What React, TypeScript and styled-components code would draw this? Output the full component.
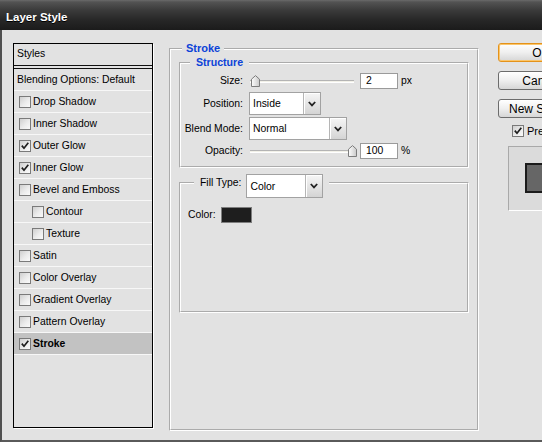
import React from "react";
import styled, { createGlobalStyle } from "styled-components";

const GlobalStyle = createGlobalStyle`
  html, body {
    margin: 0;
    padding: 0;
    background: #e2e2e2;
    overflow: hidden;
  }
  body {
    font-family: "Liberation Sans", Arial, sans-serif;
    font-size: 10.4px;
    color: #000;
  }
  * {
    box-sizing: border-box;
  }
`;

const Window = styled.div`
  width: 542px;
  height: 442px;
  overflow: hidden;
  display: flex;
  flex-direction: column;
  background: #e2e2e2;
`;

const TitleBar = styled.div`
  height: 30px;
  flex-shrink: 0;
  display: flex;
  align-items: center;
  padding: 3px 0 0 6px;
  background: linear-gradient(
    to bottom,
    #6a6a6a 0px,
    #535353 2px,
    #3b3b3b 10px,
    #272727 20px,
    #1b1b1b 30px
  );
`;

const Title = styled.span`
  color: #fff;
  font-weight: bold;
  font-size: 11.5px;
  text-shadow: 0 1px 0 #000;
`;

const Body = styled.div`
  flex: 1;
  display: flex;
  align-items: flex-start;
  padding: 13px 0 0 11px;
  border-left: 2px solid #505050;
  border-bottom: 2px solid #5a5a5a;
`;

/* ---------- left list ---------- */

const StylesPanel = styled.div`
  width: 140px;
  height: 385px;
  flex-shrink: 0;
  border: 1px solid #000;
  box-shadow: 1px 1px 0 #fff;
  display: flex;
  flex-direction: column;
`;

const PanelHeader = styled.div`
  height: 25px;
  padding: 0 0 2px 3px;
  display: flex;
  align-items: center;
  border-bottom: 4px double #111;
`;

const PanelRow = styled.div<{ $indent?: boolean; $selected?: boolean }>`
  height: 22px;
  display: flex;
  align-items: center;
  padding-left: ${(p) => (p.$indent ? "18px" : "5px")};
  border-bottom: 1px solid #f7f7f7;
  background: ${(p) => (p.$selected ? "#c2c2c2" : "transparent")};
  font-weight: ${(p) => (p.$selected ? "bold" : "normal")};
`;

const BlendRow = styled(PanelRow)`
  padding-left: 3px;
`;

const BoxWrap = styled.span`
  width: 12px;
  height: 12px;
  flex-shrink: 0;
  border: 1px solid #7a7a7a;
  background: linear-gradient(135deg, #cfcfcf 0%, #ececec 55%, #fafafa 100%);
  display: flex;
  align-items: center;
  justify-content: center;
  margin-right: 2px;
`;

const CheckBox = ({ checked }: { checked?: boolean }) => (
  <BoxWrap>
    {checked && (
      <svg width="10" height="10" viewBox="0 0 10 10">
        <path
          d="M1.8 4.6 L4 7.2 L8.3 1.8"
          fill="none"
          stroke="#1e1e1e"
          strokeWidth="1.7"
        />
      </svg>
    )}
  </BoxWrap>
);

/* ---------- fieldsets ---------- */

const OuterGroup = styled.fieldset`
  margin: -1px 0 0 16px;
  width: 310px;
  height: 389px;
  flex-shrink: 0;
  min-width: 0;
  border: 2px groove #fff;
  padding: 0 8px;
`;

const BlueLegend = styled.legend<{ $ml: number; $pad: number; $size: number }>`
  margin-left: ${(p) => p.$ml}px;
  padding: 0 ${(p) => p.$pad}px;
  color: #0c42d8;
  font-weight: bold;
  font-size: ${(p) => p.$size}px;
  line-height: 13px;
`;

const InnerGroup = styled.fieldset<{ $mt: number; $h?: number }>`
  margin: ${(p) => p.$mt}px 0 0 0;
  min-width: 0;
  ${(p) => (p.$h ? `height: ${p.$h}px;` : "")}
  border: 2px groove #fff;
`;

const StructureGroup = styled(InnerGroup)`
  padding: 2px 0 7px 0;
  display: flex;
  flex-direction: column;
  gap: 2px;
`;

const FillGroup = styled(InnerGroup)`
  padding: 14px 0 0 7px;
`;

const FillLegend = styled.legend`
  margin-left: 6px;
  padding: 0 6px;
  height: 18px;
  display: flex;
  align-items: flex-start;
  line-height: 18px;
`;

const Row = styled.div<{ $h: number }>`
  height: ${(p) => p.$h}px;
  display: flex;
  align-items: center;
`;

const Label = styled.span`
  width: 62px;
  margin-right: 6px;
  text-align: right;
  flex-shrink: 0;
`;

/* ---------- slider ---------- */

const SliderBox = styled.div`
  position: relative;
  width: 108px;
  height: 12px;
  flex-shrink: 0;
`;

const Track = styled.div`
  position: absolute;
  left: 1px;
  right: 3px;
  top: 5px;
  height: 3px;
  background: #f2f1e8;
  border-top: 1px solid #b4b4b4;
  border-bottom: 1px solid #fff;
`;

const Thumb = styled.svg`
  position: absolute;
  top: 0;
`;

const Slider = ({ value, max }: { value: number; max: number }) => (
  <SliderBox>
    <Track />
    <Thumb
      width="9"
      height="12"
      viewBox="0 0 9 12"
      style={{ left: 1 + Math.round((value / max) * 98) }}
    >
      <defs>
        <linearGradient id="thumbFill" x1="0" y1="0" x2="1" y2="0">
          <stop offset="0" stopColor="#fdfdfd" />
          <stop offset="1" stopColor="#c9c9c9" />
        </linearGradient>
      </defs>
      <path
        d="M0.5 4.2 L4.5 0.6 L8.5 4.2 V11.5 H0.5 Z"
        fill="url(#thumbFill)"
        stroke="#7c7c7c"
      />
    </Thumb>
  </SliderBox>
);

const NumInput = styled.div`
  width: 38px;
  height: 16px;
  margin-left: 3px;
  border: 1px solid #9a9a9a;
  background: #fff;
  padding-left: 5px;
  display: flex;
  align-items: center;
`;

const Unit = styled.span`
  margin-left: 3px;
`;

/* ---------- select ---------- */

const SelectBox = styled.div<{ $w: number; $h: number }>`
  width: ${(p) => p.$w}px;
  height: ${(p) => p.$h}px;
  flex-shrink: 0;
  border: 1px solid #a2a2a2;
  background: #fff;
  display: flex;
  align-items: stretch;
`;

const SelectText = styled.span`
  flex: 1;
  padding-left: 3px;
  display: flex;
  align-items: center;
  line-height: normal;
`;

const ArrowBtn = styled.span`
  width: 17px;
  border-left: 1px solid #b5b5b5;
  box-shadow: inset 1px 1px 0 #fff;
  background: linear-gradient(to bottom, #f6f6f6, #d4d4d4);
  display: flex;
  align-items: center;
  justify-content: center;
`;

const Select = ({ value, w, h = 23 }: { value: string; w: number; h?: number }) => (
  <SelectBox $w={w} $h={h}>
    <SelectText>{value}</SelectText>
    <ArrowBtn>
      <svg width="8" height="6" viewBox="0 0 8 6">
        <path d="M0.8 1 L4 4.4 L7.2 1" fill="none" stroke="#222" strokeWidth="1.8" />
      </svg>
    </ArrowBtn>
  </SelectBox>
);

const FillLabel = styled.span`
  margin-right: 5px;
`;

const ColorRow = styled.div`
  height: 17px;
  display: flex;
  align-items: center;
`;

const Swatch = styled.span`
  width: 31px;
  height: 16px;
  margin-left: 5px;
  border: 1px solid #7e7e7e;
  background: #1e1e1e;
`;

/* ---------- right column ---------- */

const RightCol = styled.div`
  margin-left: 19px;
  width: 120px;
  flex-shrink: 0;
  display: flex;
  flex-direction: column;
  align-items: flex-start;
`;

const Button = styled.div<{ $primary?: boolean }>`
  width: 86px;
  height: 19px;
  margin-bottom: 9px;
  border: 1px solid ${(p) => (p.$primary ? "#e4921a" : "#6c6c6c")};
  border-radius: 3px;
  box-shadow: ${(p) => (p.$primary ? "inset 0 0 0 1px #fbc66c" : "inset 0 1px 0 #fff")};
  background: linear-gradient(to bottom, #ffffff 0%, #efefef 50%, #d6d6d6 100%);
  font-size: 12px;
  display: flex;
  align-items: center;
  justify-content: center;
  white-space: nowrap;
`;

const PreviewRow = styled.div`
  margin: -2px 0 0 14px;
  display: flex;
  align-items: center;
  font-size: 11px;
  gap: 1px;
`;

const PreviewBox = styled.div`
  margin: 9px 0 0 10px;
  width: 100px;
  height: 65px;
  border: 1px solid;
  border-color: #a9a9a9 #fff #fff #a9a9a9;
  background: #dbdbdb;
  padding: 16px 0 0 16px;
`;

const PreviewSwatch = styled.div`
  width: 60px;
  height: 30px;
  border: 2px solid #1b1b1b;
  background: #666;
`;

const items: { name: string; checked?: boolean; indent?: boolean; selected?: boolean }[] = [
  { name: "Drop Shadow" },
  { name: "Inner Shadow" },
  { name: "Outer Glow", checked: true },
  { name: "Inner Glow", checked: true },
  { name: "Bevel and Emboss" },
  { name: "Contour", indent: true },
  { name: "Texture", indent: true },
  { name: "Satin" },
  { name: "Color Overlay" },
  { name: "Gradient Overlay" },
  { name: "Pattern Overlay" },
  { name: "Stroke", checked: true, selected: true },
];

export default function App() {
  return (
    <>
      <GlobalStyle />
      <Window>
        <TitleBar>
          <Title>Layer Style</Title>
        </TitleBar>
        <Body>
          <StylesPanel>
            <PanelHeader>Styles</PanelHeader>
            <BlendRow>Blending Options: Default</BlendRow>
            {items.map((it) => (
              <PanelRow key={it.name} $indent={it.indent} $selected={it.selected}>
                <CheckBox checked={it.checked} />
                {it.name}
              </PanelRow>
            ))}
          </StylesPanel>

          <OuterGroup>
            <BlueLegend $ml={3} $pad={4} $size={11}>
              Stroke
            </BlueLegend>
            <StructureGroup $mt={1}>
              <BlueLegend $ml={9} $pad={6} $size={10.6}>
                Structure
              </BlueLegend>
              <Row $h={19}>
                <Label>Size:</Label>
                <Slider value={2} max={250} />
                <NumInput>2</NumInput>
                <Unit>px</Unit>
              </Row>
              <Row $h={23}>
                <Label>Position:</Label>
                <Select value="Inside" w={72} />
              </Row>
              <Row $h={23}>
                <Label>Blend Mode:</Label>
                <Select value="Normal" w={98} />
              </Row>
              <Row $h={17}>
                <Label>Opacity:</Label>
                <Slider value={100} max={100} />
                <NumInput>100</NumInput>
                <Unit>%</Unit>
              </Row>
            </StructureGroup>
            <FillGroup $mt={6} $h={139}>
              <FillLegend>
                <FillLabel>Fill Type:</FillLabel>
                <Select value="Color" w={77} h={24} />
              </FillLegend>
              <ColorRow>
                Color:
                <Swatch />
              </ColorRow>
            </FillGroup>
          </OuterGroup>

          <RightCol>
            <Button $primary>OK</Button>
            <Button>Cancel</Button>
            <Button>New Style...</Button>
            <PreviewRow>
              <CheckBox checked />
              Preview
            </PreviewRow>
            <PreviewBox>
              <PreviewSwatch />
            </PreviewBox>
          </RightCol>
        </Body>
      </Window>
    </>
  );
}
